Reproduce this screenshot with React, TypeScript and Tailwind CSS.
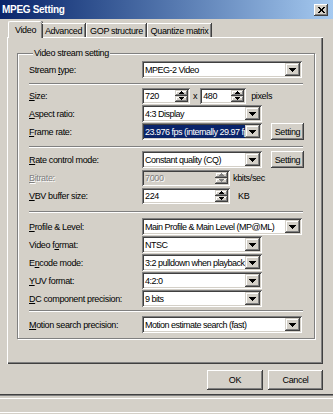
import React from "react";

const FONT = "font-['Liberation_Sans',Arial,sans-serif]";
const SUNKEN =
  "shadow-[inset_1px_1px_0_#808080,inset_-1px_-1px_0_#ffffff,inset_2px_2px_0_#404040,inset_-2px_-2px_0_#d4d0c8]";
const RAISED =
  "shadow-[inset_-1px_-1px_0_#404040,inset_1px_1px_0_#ffffff,inset_-2px_-2px_0_#808080,inset_2px_2px_0_#d4d0c8]";
const RAISED_SM =
  "shadow-[inset_-1px_-1px_0_#404040,inset_1px_1px_0_#d4d0c8,inset_-2px_-2px_0_#808080,inset_2px_2px_0_#ffffff]";

function ArrowDown({ color = "#000" }: { color?: string }) {
  return (
    <svg width="7" height="4" viewBox="0 0 7 4">
      <path d="M0 0h7v1H0zM1 1h5v1H1zM2 2h3v1H2zM3 3h1v1H3z" fill={color} />
    </svg>
  );
}

function ArrowUp({ color = "#000" }: { color?: string }) {
  return (
    <svg width="5" height="3" viewBox="0 0 5 3">
      <path d="M2 0h1v1H2zM1 1h3v1H1zM0 2h5v1H0z" fill={color} />
    </svg>
  );
}

function ArrowDownSm({ color = "#000" }: { color?: string }) {
  return (
    <svg width="5" height="3" viewBox="0 0 5 3">
      <path d="M0 0h5v1H0zM1 1h3v1H1zM2 2h1v1H2z" fill={color} />
    </svg>
  );
}

function Select({
  w,
  text,
  hl,
}: {
  w: string;
  text: string;
  hl?: boolean;
}) {
  return (
    <div className={`${w} h-[17px] bg-white ${SUNKEN} p-[2px] flex`}>
      <div
        className={`flex-1 min-w-0 flex items-center overflow-hidden whitespace-nowrap pl-[1px] tracking-[-0.5px] ${
          hl ? "bg-[#0a246a] text-white" : "text-black"
        }`}
      >
        {text}
      </div>
      <div className={`w-[15px] shrink-0 h-full bg-[#d4d0c8] ${RAISED_SM} flex items-center justify-center`}>
        <ArrowDown />
      </div>
    </div>
  );
}

function Spin({
  w,
  value,
  disabled,
}: {
  w: string;
  value: string;
  disabled?: boolean;
}) {
  const c = disabled ? "#808080" : "#000";
  return (
    <div
      className={`${w} h-[16px] ${disabled ? "bg-[#d4d0c8]" : "bg-white"} ${SUNKEN} p-[2px] flex`}
    >
      <div
        className={`flex-1 flex items-center pl-[1px] ${
          disabled ? "text-[#808080] [text-shadow:1px_1px_0_#fff]" : "text-black"
        }`}
      >
        {value}
      </div>
      <div className="w-[13px] h-full flex flex-col">
        <div className={`flex-1 bg-[#d4d0c8] ${RAISED_SM} flex items-center justify-center`}>
          <ArrowUp color={c} />
        </div>
        <div className={`flex-1 bg-[#d4d0c8] ${RAISED_SM} flex items-center justify-center`}>
          <ArrowDownSm color={c} />
        </div>
      </div>
    </div>
  );
}

function Btn({ w, h, label }: { w: string; h: string; label: string }) {
  return (
    <div className={`${w} ${h} bg-[#d4d0c8] ${RAISED} flex items-center justify-center text-black whitespace-nowrap`}>
      {label}
    </div>
  );
}

function Label({
  pre,
  u,
  post,
  disabled,
}: {
  pre?: string;
  u: string;
  post: string;
  disabled?: boolean;
}) {
  return (
    <div
      className={`w-[113px] shrink-0 whitespace-nowrap ${
        disabled ? "text-[#808080] [text-shadow:1px_1px_0_#fff]" : "text-black"
      }`}
    >
      {pre}
      <span className="underline underline-offset-[1px]">{u}</span>
      {post}
    </div>
  );
}

function Row({ children, mt }: { children: React.ReactNode; mt?: string }) {
  return <div className={`flex items-center h-[17px] ${mt ?? "mt-[1px]"}`}>{children}</div>;
}

function Sep({ mt }: { mt: string }) {
  return (
    <div className={`${mt} w-[274px] h-[2px] border-t border-t-[#808080] border-b border-b-white`} />
  );
}

export default function App() {
  return (
    <div
      className={`w-[333px] h-[414px] bg-[#d4d0c8] ${FONT} text-[9px] tracking-[-0.35px] leading-[12px] flex flex-col overflow-hidden`}
    >
      {/* title bar */}
      <div className="h-[19px] shrink-0 flex items-center pl-[2px] pr-[5px] bg-linear-to-r from-[#0a246a] to-[#a6caf0]">
        <span className="text-white font-bold text-[10px] tracking-[-0.3px]">MPEG Setting</span>
        <div
          className={`ml-auto w-[14px] h-[12px] bg-[#d4d0c8] ${RAISED} flex items-center justify-center`}
        >
          <svg width="7" height="6" viewBox="0 0 7 6">
            <path
              d="M0 0h2v1H0zM5 0h2v1H5zM1 1h2v1H1zM4 1h2v1H4zM2 2h3v1H2zM2 3h3v1H2zM1 4h2v1H1zM4 4h2v1H4zM0 5h2v1H0zM5 5h2v1H5z"
              fill="#000"
            />
          </svg>
        </div>
      </div>

      {/* tabs */}
      <div className="ml-[8px] mt-[2px] flex items-end h-[16px] relative z-10 whitespace-nowrap">
        <div className="w-[34px] h-[17px] mb-[-1px] bg-[#d4d0c8] border-l border-t border-white rounded-tl-[2px] rounded-tr-[2px] shadow-[inset_-1px_0_0_#808080,1px_0_0_#404040] flex items-start justify-center pt-[2px] text-black">
          Video
        </div>
        <div className="w-[43px] h-[14px] border-t border-white shadow-[inset_-1px_0_0_#808080,1px_0_0_#404040] flex items-center justify-center text-black">
          Advanced
        </div>
        <div className="w-[60px] h-[14px] ml-[1px] border-l border-t border-white shadow-[inset_-1px_0_0_#808080,1px_0_0_#404040] flex items-center justify-center text-black">
          GOP structure
        </div>
        <div className="w-[64px] h-[14px] ml-[1px] border-l border-t border-white shadow-[inset_-1px_0_0_#808080,1px_0_0_#404040] flex items-center justify-center text-black">
          Quantize matrix
        </div>
      </div>

      {/* tab panel */}
      <div
        className={`ml-[7px] w-[316px] h-[327px] shrink-0 bg-[#d4d0c8] shadow-[inset_1px_1px_0_#ffffff,inset_-1px_-1px_0_#404040,inset_-2px_-2px_0_#808080] pt-[10px] pl-[10px]`}
      >
        <fieldset className="w-[296px] h-[292px] border border-[#808080] shadow-[inset_1px_1px_0_#ffffff,1px_1px_0_#ffffff] pl-[11px] pr-[10px]">
          <legend className="ml-[4px] px-[1px] bg-[#d4d0c8] text-black leading-[12px]">
            Video stream setting
          </legend>

          <Row mt="mt-[2px]">
            <Label pre="Stream " u="t" post="ype:" />
            <Select w="w-[160px]" text="MPEG-2 Video" />
          </Row>

          <Sep mt="mt-[5px]" />

          <Row mt="mt-[2px]">
            <Label u="S" post="ize:" />
            <Spin w="w-[48px]" value="720" />
            <span className="ml-[3px] mr-[3px] text-black">x</span>
            <Spin w="w-[46px]" value="480" />
            <span className="ml-[5px] text-black">pixels</span>
          </Row>
          <Row>
            <Label u="A" post="spect ratio:" />
            <Select w="w-[120px]" text="4:3 Display" />
          </Row>
          <Row>
            <Label u="F" post="rame rate:" />
            <Select w="w-[120px]" text="23.976 fps (internally 29.97 fps)" hl />
            <div className="ml-[9px]">
              <Btn w="w-[33px]" h="h-[17px]" label="Setting" />
            </div>
          </Row>

          <Sep mt="mt-[6px]" />

          <Row mt="mt-[3px]">
            <Label u="R" post="ate control mode:" />
            <Select w="w-[120px]" text="Constant quality (CQ)" />
            <div className="ml-[9px]">
              <Btn w="w-[33px]" h="h-[17px]" label="Setting" />
            </div>
          </Row>
          <Row>
            <Label u="B" post="itrate:" disabled />
            <Spin w="w-[88px]" value="7000" disabled />
            <span className="ml-[3px] text-black">kbits/sec</span>
          </Row>
          <Row>
            <Label u="V" post="BV buffer size:" />
            <Spin w="w-[88px]" value="224" />
            <span className="ml-[8px] text-black">KB</span>
          </Row>

          <Sep mt="mt-[7px]" />

          <Row mt="mt-[5px]">
            <Label u="P" post="rofile & Level:" />
            <Select w="w-[160px]" text="Main Profile & Main Level (MP@ML)" />
          </Row>
          <Row>
            <Label pre="Video f" u="o" post="rmat:" />
            <Select w="w-[120px]" text="NTSC" />
          </Row>
          <Row>
            <Label pre="E" u="n" post="code mode:" />
            <Select w="w-[120px]" text="3:2 pulldown when playback" />
          </Row>
          <Row>
            <Label u="Y" post="UV format:" />
            <Select w="w-[120px]" text="4:2:0" />
          </Row>
          <Row>
            <Label u="D" post="C component precision:" />
            <Select w="w-[120px]" text="9 bits" />
          </Row>

          <Sep mt="mt-[3px]" />

          <Row mt="mt-[4px]">
            <Label u="M" post="otion search precision:" />
            <Select w="w-[160px]" text="Motion estimate search (fast)" />
          </Row>
        </fieldset>
      </div>

      {/* buttons */}
      <div className="ml-[7px] w-[316px] flex justify-end gap-[5px] mt-[6px]">
        <Btn w="w-[56px]" h="h-[20px]" label="OK" />
        <Btn w="w-[55px]" h="h-[20px]" label="Cancel" />
      </div>

      {/* bottom edge */}
      <div className="mt-[4px] h-[1px] bg-[#404040] shrink-0" />
      <div className="h-[1px] bg-[#808080] shrink-0" />
      <div className="h-[2px] shrink-0" />
      <div className="h-[1px] bg-white shrink-0" />
      <div className="h-[13px] shrink-0" />
      <div className="h-[1px] bg-white shrink-0" />
      <div className="flex-1" />
    </div>
  );
}
